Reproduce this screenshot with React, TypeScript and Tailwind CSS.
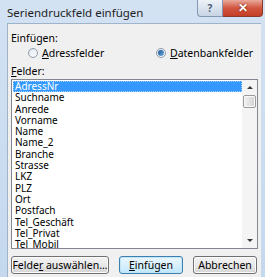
import React from 'react';

const FIELDS = [
  'AdressNr',
  'Suchname',
  'Anrede',
  'Vorname',
  'Name',
  'Name_2',
  'Branche',
  'Strasse',
  'LKZ',
  'PLZ',
  'Ort',
  'Postfach',
  'Tel_Geschäft',
  'Tel_Privat',
  'Tel_Mobil',
];

function Radio({ checked, label, accel }: { checked?: boolean; label: string; accel: string }) {
  const rest = label.slice(accel.length);
  return (
    <div className="flex items-center gap-[4px]">
      <span className="relative flex h-[10px] w-[10px] items-center justify-center rounded-full border border-[#8e9aa8] bg-gradient-to-br from-[#dfe6ee] to-[#ffffff]">
        {checked && (
          <span className="h-[6px] w-[6px] rounded-full bg-gradient-to-br from-[#1e4d8f] to-[#6fb3e8]" />
        )}
      </span>
      <span>
        <span className="underline underline-offset-[1px]">{accel}</span>
        {rest}
      </span>
    </div>
  );
}

function Button({ children, primary, className = '' }: { children: React.ReactNode; primary?: boolean; className?: string }) {
  return (
    <div
      className={`flex h-[18px] items-center justify-center rounded-[3px] border ${
        primary
          ? 'border-[#3c7fb1] bg-gradient-to-b from-[#eaf6fd] via-[#d9f0fc] to-[#bee6fd] shadow-[inset_0_0_0_1px_#c4e5f6]'
          : 'border-[#707070] bg-gradient-to-b from-[#f3f3f3] via-[#e8e8e8] to-[#d4d4d4] shadow-[inset_0_0_0_1px_#fbfbfb]'
      } ${className}`}
    >
      {children}
    </div>
  );
}

export default function App() {
  return (
    <div
      className="relative h-[277px] w-[265px] overflow-hidden bg-gradient-to-b from-[#d3e2f3] to-[#c4d8ee] text-[10.5px] text-black"
      style={{ fontFamily: '"Noto Sans", "Liberation Sans", sans-serif' }}
    >
      {/* title bar */}
      <div className="flex h-[23px] items-start">
        <div className="pl-[7px] pt-[5px] text-[11.5px] leading-[16px] text-[#1e1e1e]">Seriendruckfeld einfügen</div>
        <div className="ml-auto mr-[2px] flex">
          <div className="flex h-[17px] w-[26px] items-center justify-center rounded-bl-[4px] border border-t-0 border-[#8596b0] bg-gradient-to-b from-[#eef2f7] to-[#c7d4e4] text-[10px] font-bold text-[#4b5b73]">
            ?
          </div>
          <div className="flex h-[17px] w-[40px] items-center justify-center rounded-br-[4px] border border-l-0 border-t-0 border-[#8a3a2c] bg-gradient-to-b from-[#e9a99b] via-[#d0553f] to-[#c43e26] text-[12px] font-bold text-white [text-shadow:0_0_2px_#6b1a10]">
            ✕
          </div>
        </div>
      </div>

      {/* client area */}
      <div className="ml-[7px] mr-[4px] h-[254px] border-l border-t border-[#9fb3c9] bg-[#f0f0f0] px-[3px]">
        <div className="pt-[7px] leading-[14px]">Einfügen:</div>
        <div className="mt-[1px] flex h-[14px] items-center leading-[14px]">
          <div className="ml-[17px] w-[128px]">
            <Radio label="Adressfelder" accel="A" />
          </div>
          <Radio checked label="Datenbankfelder" accel="D" />
        </div>
        <div className="mt-[4px] leading-[14px]">
          <span className="underline underline-offset-[1px]">F</span>elder:
        </div>
        <div className="mt-[1px] flex h-[170px] border border-[#828790] bg-white">
          <div className="flex-1 overflow-hidden pl-[1px] pt-[1px] text-[10px]">
            {FIELDS.map((f, i) => (
              <div
                key={f}
                className={`h-[11.3px] whitespace-nowrap pl-[2px] leading-[11.3px] ${
                  i === 0 ? 'bg-[#3399ff] text-white outline-1 -outline-offset-1 outline-dotted outline-[#a8cfff]' : ''
                }`}
              >
                {f}
              </div>
            ))}
          </div>
          <div className="flex w-[15px] flex-col items-center bg-[#f4f4f4]">
            <div className="flex h-[15px] w-full items-center justify-center">
              <span className="h-0 w-0 border-x-[3px] border-b-[3px] border-x-transparent border-b-[#3a3a3a]" />
            </div>
            <div className="h-[13px] w-[13px] rounded-[2px] border border-[#9a9a9a] bg-gradient-to-r from-[#f0f0f0] via-[#e2e2e2] to-[#d2d2d2] shadow-[inset_0_0_0_1px_#fafafa]" />
            <div className="flex-1" />
            <div className="flex h-[15px] w-full items-center justify-center">
              <span className="h-0 w-0 border-x-[3px] border-t-[3px] border-x-transparent border-t-[#3a3a3a]" />
            </div>
          </div>
        </div>
        <div className="mt-[7px] flex leading-[14px]">
          <Button className="w-[98px]">
            <span>
              Felde<span className="underline underline-offset-[1px]">r</span> auswählen...
            </span>
          </Button>
          <Button primary className="ml-[10px] w-[64px]">
            <span>
              <span className="underline underline-offset-[1px]">E</span>infügen
            </span>
          </Button>
          <Button className="ml-[10px] w-[64px]">Abbrechen</Button>
        </div>
      </div>
    </div>
  );
}
